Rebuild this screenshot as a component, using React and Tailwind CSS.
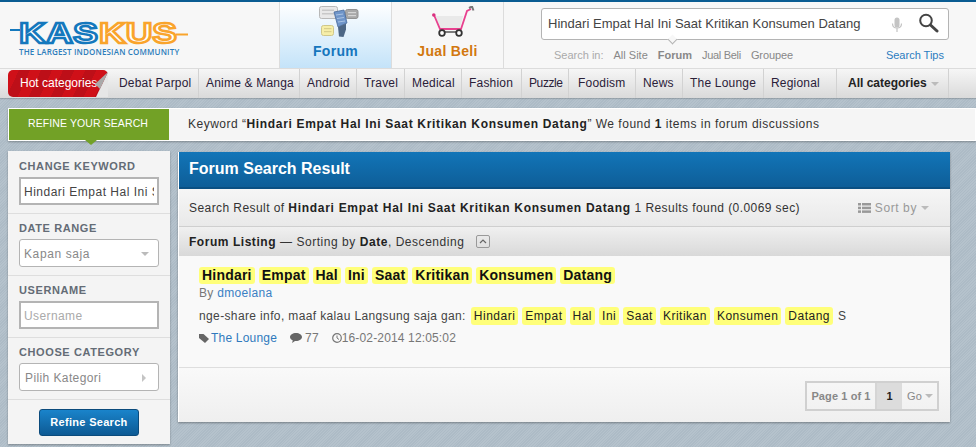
const F = "font-['Liberation_Sans',Arial,sans-serif]";

function Logo() {
  return (
    <div className="w-[178px] ml-[10px] mt-[12px]">
      <svg width="180" height="34" viewBox="0 -6 180 34" className="block">
        <path d="M0 10h10" stroke="#1478bd" strokeWidth="2" />
        <path d="M166 14.500h12" stroke="#f9a42c" strokeWidth="2" />
        <text x="9" y="23" textLength="79" lengthAdjust="spacingAndGlyphs" fontFamily="'Liberation Sans',Arial,sans-serif" fontWeight="700" fontSize="30" fill="#fff" stroke="#1478bd" strokeWidth="2.4">KAS</text>
        <text x="89" y="23" textLength="78" lengthAdjust="spacingAndGlyphs" fontFamily="'Liberation Sans',Arial,sans-serif" fontWeight="700" fontSize="30" fill="#fff" stroke="#f9a42c" strokeWidth="2.4">KUS</text>
      </svg>
      <div className="ml-[9px] text-[8px] leading-[8px] font-semibold tracking-[0.16px] text-[#2d7dbb] whitespace-nowrap font-['Open_Sans',sans-serif]">THE LARGEST INDONESIAN COMMUNITY</div>
    </div>
  );
}

function ForumIcon() {
  return (
    <svg width="40" height="32" viewBox="0 0 40 32" className="block ml-[7px]">
      <rect x="0.500" y="0.500" width="18" height="12" rx="2" fill="#e8e8e8" stroke="#b8b8b8" />
      <rect x="3" y="3.500" width="12" height="1.500" fill="#c8c8c8" />
      <rect x="3" y="7" width="12" height="1.500" fill="#c8c8c8" />
      <rect x="26.500" y="3.500" width="12.500" height="9" rx="2" fill="#a8a8a8" stroke="#929292" />
      <rect x="29" y="6" width="8" height="1.200" fill="#d5d5d5" />
      <rect x="29" y="9" width="8" height="1.200" fill="#d5d5d5" />
      <rect x="2.500" y="19.500" width="12" height="10" rx="2" fill="#f6eea8" stroke="#cfc78a" />
      <rect x="5" y="22" width="7.500" height="1.200" fill="#d9cf8c" />
      <rect x="5" y="25" width="7.500" height="1.200" fill="#d9cf8c" />
      <path d="M15 6l10-2 3 13-9 4z" fill="#6f95c9" stroke="#47699b" strokeWidth=".8" />
      <path d="M17 9l7-1M18 12.500l7-1M19 16l7-1" stroke="#a9c3e4" strokeWidth="1" />
      <path d="M19 21l8-3.500 0 6-2.500 7.500-4.500-.5z" fill="#4d6785" />
    </svg>
  );
}

function CartIcon() {
  return (
    <svg width="44" height="32" viewBox="0 0 44 32" className="block ml-[12px]">
      <path d="M3 10h28l-3 12H8z" fill="#e9e9e9" />
      <path d="M2 9l6 14h21l6-18 4-2" fill="none" stroke="#e8418f" strokeWidth="1.800" />
      <path d="M37 2l3-1.500 1.500 4" fill="none" stroke="#777" strokeWidth="2" />
      <circle cx="1.800" cy="9" r="1.800" fill="#d9307f" />
      <path d="M10 26h17" stroke="#555" strokeWidth="1.500" />
      <circle cx="10" cy="27" r="2.800" fill="#fff" stroke="#333" strokeWidth="1.800" />
      <circle cx="27" cy="27" r="2.800" fill="#fff" stroke="#333" strokeWidth="1.800" />
    </svg>
  );
}

function Tab({ icon, label, active, color }) {
  return (
    <div className={`w-[112px] h-full flex flex-col items-center border-r border-[#dcdcdc] ${active ? "bg-gradient-to-b from-white to-[#c4e3f9]" : ""}`}>
      <div className="h-[32px] mt-[4px]">{icon}</div>
      <div className={`mt-[3px] text-[14px] leading-[20px] font-bold tracking-[0.3px] ${color}`}>{label}</div>
    </div>
  );
}

const navItems = [
  ["Debat Parpol", 91, 11, ""], ["Anime & Manga", 101, 7, ""], ["Android", 57, 7, ""], ["Travel", 48, 7, ""],
  ["Medical", 57, 7, ""], ["Fashion", 60, 7, ""], ["Puzzle", 47, 7, "tracking-[-0.4px]"], ["Foodism", 67, 9, ""],
  ["News", 47, 7, ""], ["The Lounge", 81, 7, ""], ["Regional", 73, 7, ""],
];

function Caret({ className = "" }) {
  return <span className={`inline-block w-0 h-0 border-x-[4px] border-x-transparent border-t-[4px] border-t-[#bbb] ${className}`} />;
}

function SideSection({ label, children }) {
  return (
    <div className="h-[62px] px-[11px] border-b border-[#dedede] pt-[7px]">
      <div className="text-[11px] leading-[14px] font-bold text-[#646c76] tracking-[0.6px] whitespace-nowrap mb-[4px]">{label}</div>
      {children}
    </div>
  );
}

const words = ["Hindari", "Empat", "Hal", "Ini", "Saat", "Kritikan", "Konsumen", "Datang"];

export default function App() {
  return (
    <div className={`${F} w-[976px] h-[447px] overflow-hidden bg-[#b1bfc9] bg-[repeating-linear-gradient(135deg,#b5c2cc_0px,#b5c2cc_1px,#adbbc6_1px,#adbbc6_2px)] text-[#333]`}>
      <header className="h-[69px] bg-[#f7f7f7] border-t-2 border-t-[#0a5c92] border-b border-b-[#dcdcdc] flex">
        <div className="w-[280px] border-r border-[#dcdcdc]"><Logo /></div>
        <Tab icon={<ForumIcon />} label="Forum" active color="text-[#1676bd]" />
        <Tab icon={<CartIcon />} label="Jual Beli" color="text-[#d2780f]" />
        <div className="ml-[37px] w-[408px] pt-[6px]">
          <div className="relative h-[32px] bg-white border border-[#b4b4b4] rounded-[3px] flex items-center pl-[6px]">
            <span className="text-[13px] tracking-[0.02px] text-[#444] whitespace-nowrap flex-1">Hindari Empat Hal Ini Saat Kritikan Konsumen Datang</span>
            <svg width="12" height="16" viewBox="0 0 12 16" className="mr-[15px] mt-[1px]">
              <rect x="3.500" y="0.500" width="5" height="10" rx="2.500" fill="#c4c4c4" />
              <path d="M1.500 6.500c0 6 9 6 9 0M6 11v4" fill="none" stroke="#c4c4c4" strokeWidth="1.200" />
            </svg>
            <svg width="21" height="20" viewBox="0 0 20 20" className="mr-[9px] -mt-[2px]">
              <circle cx="7.500" cy="7.500" r="5.800" fill="none" stroke="#444" strokeWidth="2" />
              <path d="M12 12l6.500 6" stroke="#444" strokeWidth="3" strokeLinecap="round" />
            </svg>
            <span className="absolute left-[127px] bottom-[-4px] w-[7px] h-[7px] rotate-45 bg-[#f7f7f7] border-r border-b border-[#b4b4b4]" />
          </div>
          <div className="flex items-center mt-[8px] text-[11px] leading-[14px] text-[#888] whitespace-nowrap">
            <span className="ml-[13px] text-[#aaa]">Search in:</span>
            <span className="ml-[10px]">All Site</span>
            <span className="ml-[10px] font-bold">Forum</span>
            <span className="ml-[10px] tracking-[-0.3px]">Jual Beli</span>
            <span className="ml-[10px] tracking-[-0.1px]">Groupee</span>
            <span className="ml-auto mr-[5px] text-[#2b7cc0]">Search Tips</span>
          </div>
        </div>
      </header>

      <nav className="h-[29px] flex bg-gradient-to-b from-[#f6f6f6] to-[#dadada] text-[12px] tracking-[0.2px] text-[#2a2038] shadow-[0_1px_1px_rgba(0,0,0,0.15)]">
        <div className="relative ml-[8px] w-[100px] h-[27px] mt-[1px] bg-[#ce1018] bg-[repeating-linear-gradient(115deg,#cf1018_0px,#cf1018_10px,#bd0f18_10px,#bd0f18_20px)] rounded-l-[5px] rounded-tr-[5px] text-white leading-[27px] pl-[12px] whitespace-nowrap tracking-[0px]">
          Hot categories
          <svg width="14" height="25" viewBox="0 0 14 25" className="absolute right-0 bottom-0">
            <path d="M14 0V25H2z" fill="#e6e6e6" />
            <path d="M14 0L6 17 1 12z" fill="#a9a9a9" />
          </svg>
        </div>
        {navItems.map(([t, w, p, c]) => (
          <div key={t} style={{ width: w, paddingLeft: p }} className={`h-full leading-[29px] border-r border-[#d2d2d2] whitespace-nowrap shrink-0 ${c}`}>{t}</div>
        ))}
        <div className="w-[112px] h-full leading-[29px] pl-[11px] font-bold text-[#222] border-r border-[#d2d2d2] whitespace-nowrap tracking-[0px]">
          All categories <Caret className="ml-[1px] mb-[1px]" />
        </div>
      </nav>

      <div className="mt-[10px] ml-[8px] h-[33px] bg-[#f5f5f5] border border-white flex items-center shadow-[0_1px_2px_rgba(0,0,0,0.3)]">
        <div className="relative w-[160px] h-full pb-px pr-[2px] bg-[#72a126] text-white text-[10.5px] tracking-[0.1px] flex items-center justify-center whitespace-nowrap">
          REFINE YOUR SEARCH
          <span className="absolute left-[76px] bottom-[-5px] w-0 h-0 border-x-[6px] border-x-transparent border-t-[5px] border-t-[#72a126]" />
        </div>
        <div className="ml-[19px] -mt-[2px] text-[12px] tracking-[0.5px] whitespace-nowrap">
          Keyword “<b className="text-[#222] tracking-[0.67px]">Hindari Empat Hal Ini Saat Kritikan Konsumen Datang</b>” We found <b className="text-[#222]">1</b> items in forum discussions
        </div>
      </div>

      <div className="flex items-start mt-[10px] ml-[8px]">
        <aside className="w-[162px] h-[293px] bg-[#f4f4f4] shadow-[0_1px_2px_rgba(0,0,0,0.3)] shrink-0 pt-px">
          <SideSection label="CHANGE KEYWORD">
            <input readOnly value="Hindari Empat Hal Ini Saat Kritikan" className="w-[140px] h-[28px] bg-white border-2 border-[#b4b4b4] pl-[3px] pr-[3px] pt-[2px] text-[12px] tracking-[0.5px] text-[#444] outline-none" />
          </SideSection>
          <SideSection label="DATE RANGE">
            <div className="w-[140px] h-[28px] bg-white border border-[#b4b4b4] rounded-[3px] pl-[4px] pr-[9px] pt-[2px] flex items-center justify-between text-[12px] tracking-[0.6px] text-[#888]">
              Kapan saja <Caret />
            </div>
          </SideSection>
          <SideSection label="USERNAME">
            <input readOnly placeholder="Username" className="w-[140px] h-[28px] bg-white border-2 border-[#b4b4b4] pl-[3px] pt-[2px] text-[12px] tracking-[0.4px] outline-none placeholder:text-[#aaa]" />
          </SideSection>
          <SideSection label="CHOOSE CATEGORY">
            <div className="w-[140px] h-[28px] bg-white border border-[#b4b4b4] rounded-[3px] pl-[5px] pr-[12px] pt-[2px] flex items-center justify-between text-[12px] tracking-[0.4px] text-[#888]">
              Pilih Kategori
              <span className="w-0 h-0 border-y-[4px] border-y-transparent border-l-[4px] border-l-[#c4c4c4]" />
            </div>
          </SideSection>
          <div className="flex justify-center pt-[9px]">
            <div className="w-[100px] h-[27px] rounded-[3px] bg-gradient-to-b from-[#1a84cb] to-[#0d5a94] border border-[#0b4b7c] text-white text-[11px] font-bold tracking-[0.3px] flex items-center justify-center">Refine Search</div>
          </div>
        </aside>

        <main className="ml-[8px] mt-[1px] w-[772px] h-[270px] bg-[#f9f9f9] shadow-[0_1px_2px_rgba(0,0,0,0.35)] flex flex-col border-l border-white">
          <div className="h-[37px] bg-gradient-to-b from-[#1275b8] to-[#0e5e98] border-b-2 border-b-[#0b5083] text-white font-bold text-[16px] leading-[33px] pl-[10px] shrink-0">Forum Search Result</div>
          <div className="h-[38px] bg-gradient-to-b from-[#f6f6f6] to-[#e9e9e9] border-b border-[#cfcfcf] flex items-center pl-[10px] pr-[21px] text-[12px] tracking-[0.43px] shrink-0 whitespace-nowrap">
            <span>Search Result of <b className="text-[#222] tracking-[0.7px]">Hindari Empat Hal Ini Saat Kritikan Konsumen Datang</b> 1 Results found (0.0069 sec)</span>
            <span className="ml-auto flex items-center text-[#999] tracking-[0.6px]">
              <svg width="13" height="10" viewBox="0 0 13 10" className="mr-[4px]" fill="#999">
                <rect x="0" y="0" width="3" height="2.500" /><rect x="4" y="0" width="9" height="2.500" />
                <rect x="0" y="3.700" width="3" height="2.500" /><rect x="4" y="3.700" width="9" height="2.500" />
                <rect x="0" y="7.400" width="3" height="2.500" /><rect x="4" y="7.400" width="9" height="2.500" />
              </svg>
              Sort by <Caret className="ml-[4px]" />
            </span>
          </div>
          <div className="h-[29px] bg-gradient-to-b from-[#f0f0f0] to-[#d9d9d9] flex items-center pl-[10px] text-[12px] tracking-[0.54px] shrink-0 whitespace-nowrap">
            <b className="text-[#222]">Forum Listing</b><span className="ml-[4px]">— Sorting by <b className="text-[#222]">Date</b>, Descending</span>
            <span className="ml-[12px] w-[14px] h-[13px] border border-[#999] rounded-[2px] flex items-center justify-center">
              <svg width="8" height="5" viewBox="0 0 8 5"><path d="M1 4l3-3 3 3" fill="none" stroke="#666" strokeWidth="1.200" /></svg>
            </span>
          </div>
          <div className="h-[112px] border-b border-[#dedede] pl-[20px] pt-[11px] shrink-0">
            <div className="flex gap-[4px] text-[14px] font-bold leading-[17px] text-[#111] tracking-[0.21px]">
              {words.map((w) => <span key={w} className="bg-[#ffff7a] rounded-[3px] px-[3px]">{w}</span>)}
            </div>
            <div className="text-[12px] leading-[14px] mt-[2px] text-[#777] tracking-[0.3px]">By <span className="text-[#3a80c4]">dmoelana</span></div>
            <div className="flex items-center gap-[4px] mt-[7px] text-[12px] leading-[18px] tracking-[0.5px] text-[#444] whitespace-nowrap">
              <span className="mr-[1px] tracking-[0.37px]">nge-share info, maaf kalau Langsung saja gan:</span>
              {words.map((w) => <span key={w} className="bg-[#ffff7a] rounded-[3px] px-[3px] text-[#222]">{w}</span>)}
              <span className="ml-[1px]">S</span>
            </div>
            <div className="flex items-center mt-[5px] text-[12px] leading-[16px] tracking-[0.15px] text-[#777] whitespace-nowrap">
              <svg width="10" height="10" viewBox="0 0 10 10" className="mr-[2px]"><path d="M0 1h4.500L10 6l-4 4-6-5z" fill="#666" /></svg>
              <span className="text-[#2f79bd] tracking-[0.2px]">The Lounge</span>
              <svg width="12" height="10" viewBox="0 0 12 10" className="ml-[13px] mr-[3px]"><path d="M6 0c3.300 0 6 1.800 6 4s-2.700 4-6 4l-1 0-3 2 .8-2.600C1.100 6.700 0 5.500 0 4c0-2.200 2.700-4 6-4z" fill="#666" /></svg>
              <span>77</span>
              <svg width="10" height="10" viewBox="0 0 10 10" className="ml-[13px]"><circle cx="5" cy="5" r="4.300" fill="none" stroke="#777" strokeWidth="1.200" /><path d="M5 2.500V5l2 1.500" fill="none" stroke="#777" strokeWidth="1" /></svg>
              <span>16-02-2014 12:05:02</span>
            </div>
          </div>
          <div className="flex-1 bg-gradient-to-b from-[#f9f9f9] to-[#efefef] flex justify-end items-start pt-[13px] pr-[11px]">
            <div className="h-[30px] border-2 border-[#d0d0d0] flex items-center text-[11px] font-bold text-[#888] tracking-[0.1px] whitespace-nowrap">
              <span className="w-[70px] h-full flex items-center justify-center border-r-2 border-[#d5d5d5]">Page 1 of 1</span>
              <span className="w-[25px] h-full flex items-center justify-center bg-[#dcdcdc] text-[#222]">1</span>
              <span className="w-[35px] h-full flex items-center pl-[5px] font-normal">Go <Caret className="ml-[3px]" /></span>
            </div>
          </div>
        </main>
      </div>
    </div>
  );
}
